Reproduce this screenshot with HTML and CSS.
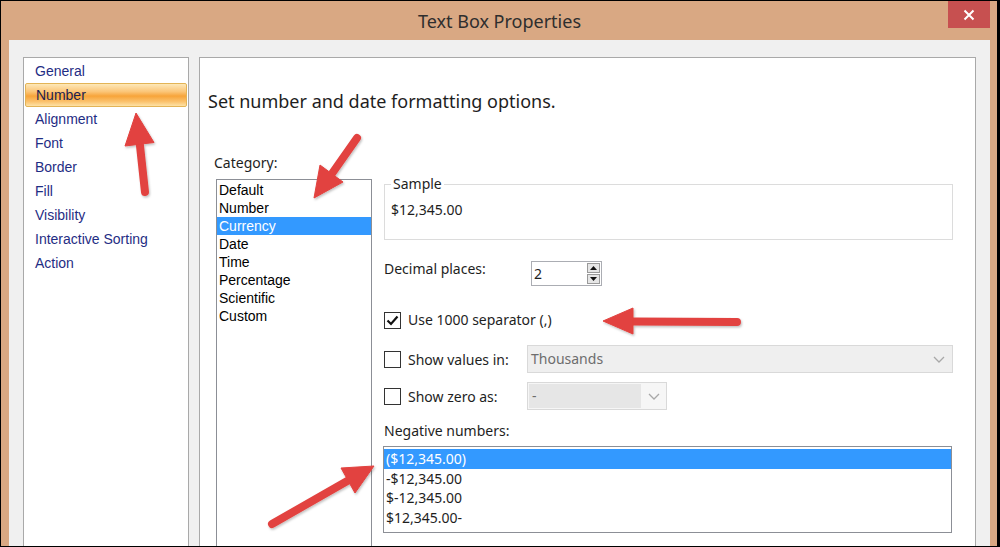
FILE: index.html
```html
<!DOCTYPE html>
<html lang="en">
<head>
<meta charset="utf-8">
<title>Text Box Properties</title>
<link rel="stylesheet" href="styles.css">
</head>
<body>
<div class="window">
  <header class="titlebar">
    <div class="title">Text Box Properties</div>
    <div class="close"><svg width="12" height="12" viewBox="0 0 12 12"><path d="M1.5 1.5L10.5 10.5M10.5 1.5L1.5 10.5" stroke="#fff" stroke-width="2" fill="none"/></svg></div>
  </header>
  <div class="client">
    <ul class="nav">
      <li>General</li>
      <li class="active">Number</li>
      <li>Alignment</li>
      <li>Font</li>
      <li>Border</li>
      <li>Fill</li>
      <li>Visibility</li>
      <li>Interactive Sorting</li>
      <li>Action</li>
    </ul>
    <section class="panel">
      <h1 class="heading">Set number and date formatting options.</h1>
      <div class="body">
        <div class="catcol">
          <div class="label">Category:</div>
          <ul class="catlist">
            <li>Default</li>
            <li>Number</li>
            <li class="sel">Currency</li>
            <li>Date</li>
            <li>Time</li>
            <li>Percentage</li>
            <li>Scientific</li>
            <li>Custom</li>
          </ul>
        </div>
        <div class="opts">
          <fieldset class="sample">
            <legend>Sample</legend>
            <div class="sample-val">$12,345.00</div>
          </fieldset>
          <div class="row decimal">
            <span class="lbl">Decimal places:</span>
            <div class="spin">
              <span class="spin-val">2</span>
              <div class="spinbtns">
                <span class="sbtn"><svg width="7" height="4" viewBox="0 0 7 4"><path d="M0 4L3.5 0L7 4Z" fill="#111"/></svg></span>
                <span class="sbtn"><svg width="7" height="4" viewBox="0 0 7 4"><path d="M0 0L3.5 4L7 0Z" fill="#111"/></svg></span>
              </div>
            </div>
          </div>
          <div class="row chk sep">
            <span class="box"><svg width="13" height="11" viewBox="0 0 13 11"><path d="M1.5 5.5L5 9L11.5 1.5" stroke="#111" stroke-width="2.2" fill="none"/></svg></span>
            <span class="chklbl">Use 1000 separator (,)</span>
          </div>
          <div class="row chk combo-row values">
            <span class="box"></span>
            <span class="chklbl fixed">Show values in:</span>
            <div class="combo wide">
              <span class="combo-text">Thousands</span>
              <svg class="chev" width="12" height="7" viewBox="0 0 12 7"><path d="M1 1L6 6L11 1" stroke="#a8a8a8" stroke-width="1.3" fill="none"/></svg>
            </div>
          </div>
          <div class="row chk combo-row zero">
            <span class="box"></span>
            <span class="chklbl fixed">Show zero as:</span>
            <div class="combo small">
              <span class="combo-edit">-</span>
              <svg class="chev" width="12" height="7" viewBox="0 0 12 7"><path d="M1 1L6 6L11 1" stroke="#a8a8a8" stroke-width="1.3" fill="none"/></svg>
            </div>
          </div>
          <div class="label neg">Negative numbers:</div>
          <ul class="neglist">
            <li class="sel">($12,345.00)</li>
            <li>-$12,345.00</li>
            <li>$-12,345.00</li>
            <li>$12,345.00-</li>
          </ul>
        </div>
      </div>
    </section>
  </div>
</div>
<svg class="annot" width="1000" height="547" viewBox="0 0 1000 547">
  <defs>
    <filter id="sh" x="-20%" y="-20%" width="140%" height="140%">
      <feDropShadow dx="1" dy="1.5" stdDeviation="1.2" flood-color="#000" flood-opacity="0.25"/>
    </filter>
  </defs>
  <g filter="url(#sh)" fill="#e2423f" stroke="#e2423f">
    <line x1="145" y1="192" x2="139.6" y2="142" stroke-width="8" stroke-linecap="round"/>
    <polygon points="136,113 154,142.5 125,146" stroke-width="1" stroke-linejoin="round"/>

    <line x1="357" y1="138" x2="331" y2="175" stroke-width="8" stroke-linecap="round"/>
    <polygon points="314,198 343,182 320,165" stroke-width="1" stroke-linejoin="round"/>

    <line x1="737" y1="322" x2="632" y2="321.5" stroke-width="8" stroke-linecap="round"/>
    <polygon points="603,321 633,308 633,334" stroke-width="1" stroke-linejoin="round"/>

    <line x1="272" y1="524" x2="349" y2="480" stroke-width="8" stroke-linecap="round"/>
    <polygon points="374,466 355,493 341,468" stroke-width="1" stroke-linejoin="round"/>
  </g>
</svg>
</body>
</html>
```

FILE: styles.css
```css
html, body {
  margin: 0;
  padding: 0;
}
body {
  background: #000;
  width: 1000px;
  height: 547px;
  overflow: hidden;
  position: relative;
  font-family: "Noto Sans", "Open Sans", sans-serif;
}
ul {
  list-style: none;
  margin: 0;
  padding: 0;
}
.window {
  width: 996px;
  height: 545px;
  margin: 1px 0 0 1px;
  background: #d9a883;
  padding: 0 7px 0 8px;
  box-sizing: border-box;
  display: flex;
  flex-direction: column;
  overflow: hidden;
}
.titlebar {
  height: 39px;
  flex: none;
  display: grid;
  grid-template-columns: 1fr auto 1fr;
  align-items: center;
}
.title {
  grid-column: 2;
  font-size: 18px;
  color: #2e2e2e;
  line-height: 24px;
}
.close {
  grid-column: 3;
  justify-self: end;
  align-self: start;
  width: 42px;
  height: 27px;
  background: #c75050;
  display: flex;
  align-items: center;
  justify-content: center;
}
.client {
  flex: 1;
  background: #f0f0f0;
  display: flex;
  gap: 10px;
  padding: 17px 14px 0 14px;
  min-height: 0;
}
.nav {
  width: 164px;
  flex: none;
  background: #fff;
  border: 1px solid #a9a9a9;
  border-bottom: none;
  padding-top: 1px;
  font-family: "Liberation Sans", Arial, sans-serif;
  font-size: 14px;
  color: #1f2d84;
}
.nav li {
  height: 24px;
  line-height: 24px;
  margin: 0 1px;
  padding-left: 10px;
}
.nav li.active {
  height: 22px;
  line-height: 22px;
  border: 1px solid #e3b456;
  border-radius: 2px;
  background: linear-gradient(to bottom, #fde8b8 0%, #fbc577 35%, #f7a43a 55%, #fbc26d 80%, #fde2a6 100%);
  color: #1b2250;
}
.panel {
  flex: 1;
  background: #fff;
  border: 1px solid #a9a9a9;
  border-bottom: none;
  display: flex;
  flex-direction: column;
  min-width: 0;
}
.heading {
  margin: 31px 0 0 8px;
  font-size: 18px;
  line-height: 24px;
  font-weight: normal;
  color: #1e1e1e;
}
.body {
  flex: 1;
  display: flex;
  gap: 12px;
  margin-top: 41px;
  padding-left: 16px;
  min-height: 0;
}
.label {
  font-size: 14px;
  line-height: 18px;
  color: #1e1e1e;
}
.catcol {
  width: 156px;
  display: flex;
  flex-direction: column;
}
.catcol .label {
  margin-left: -2px;
}
.catlist {
  margin-top: 7px;
  flex: 1;
  border: 1px solid #8c8f96;
  border-bottom: none;
  padding-top: 1px;
  font-family: "Liberation Sans", Arial, sans-serif;
  font-size: 14px;
  color: #000;
}
.catlist li {
  height: 18px;
  line-height: 18px;
  padding-left: 2px;
}
.catlist li.sel,
.neglist li.sel {
  background: #3399ff;
  color: #fff;
}
.opts {
  width: 569px;
  display: flex;
  flex-direction: column;
  font-size: 14px;
  color: #1e1e1e;
}
.sample {
  margin: 21px 0 0 0;
  padding: 8px 6px 20px 6px;
  border: 1px solid #dcdcdc;
  min-width: 0;
}
.sample legend {
  padding: 0 2px;
  line-height: 18px;
  font-size: 14px;
}
.sample-val {
  line-height: 18px;
}
.row {
  display: flex;
  align-items: center;
}
.decimal {
  margin-top: 21px;
  height: 25px;
}
.lbl {
  width: 147px;
  line-height: 18px;
  align-self: flex-start;
  margin-top: -1px;
}
.spin {
  width: 71px;
  height: 25px;
  box-sizing: border-box;
  border: 1px solid #abadb3;
  display: flex;
  align-items: center;
  justify-content: space-between;
  padding: 0 1px 0 2px;
}
.spin-val {
  line-height: 18px;
}
.spinbtns {
  display: flex;
  flex-direction: column;
  gap: 1px;
}
.sbtn {
  width: 13px;
  height: 10px;
  box-sizing: border-box;
  border: 1px solid #9a9a9a;
  background: #e6e6e6;
  display: flex;
  align-items: center;
  justify-content: center;
}
.chk .box {
  width: 17px;
  height: 17px;
  box-sizing: border-box;
  border: 1px solid #333;
  background: #fff;
  display: flex;
  align-items: center;
  justify-content: center;
  flex: none;
}
.chklbl {
  margin-left: 7px;
  line-height: 18px;
}
.chklbl.fixed {
  width: 119px;
  flex: none;
  padding-top: 2px;
}
.sep {
  margin-top: 24px;
  height: 20px;
}
.values {
  margin-top: 15px;
  height: 28px;
}
.zero {
  margin-top: 9px;
  height: 28px;
}
.combo {
  height: 28px;
  box-sizing: border-box;
  border: 1px solid #d9d9d9;
  display: flex;
  align-items: center;
  justify-content: space-between;
}
.combo.wide {
  width: 426px;
  background: #efefef;
  padding: 0 7px 0 3px;
}
.combo-text {
  color: #6d6d6d;
  line-height: 18px;
}
.combo.small {
  width: 140px;
  background: #f6f6f6;
  padding: 1px 6px 1px 1px;
}
.combo-edit {
  width: 112px;
  height: 24px;
  line-height: 24px;
  background: #e6e6e6;
  color: #6d6d6d;
  padding-left: 3px;
  box-sizing: border-box;
}
.neg {
  margin-top: 12px;
}
.neglist {
  margin: 6px 0 0 -1px;
  width: 569px;
  height: 87px;
  box-sizing: border-box;
  border: 1px solid #8c8f96;
  padding-top: 2px;
}
.neglist li {
  height: 19.5px;
  line-height: 19.5px;
  padding-left: 2px;
}
.annot {
  position: absolute;
  left: 0;
  top: 0;
  pointer-events: none;
}
```
